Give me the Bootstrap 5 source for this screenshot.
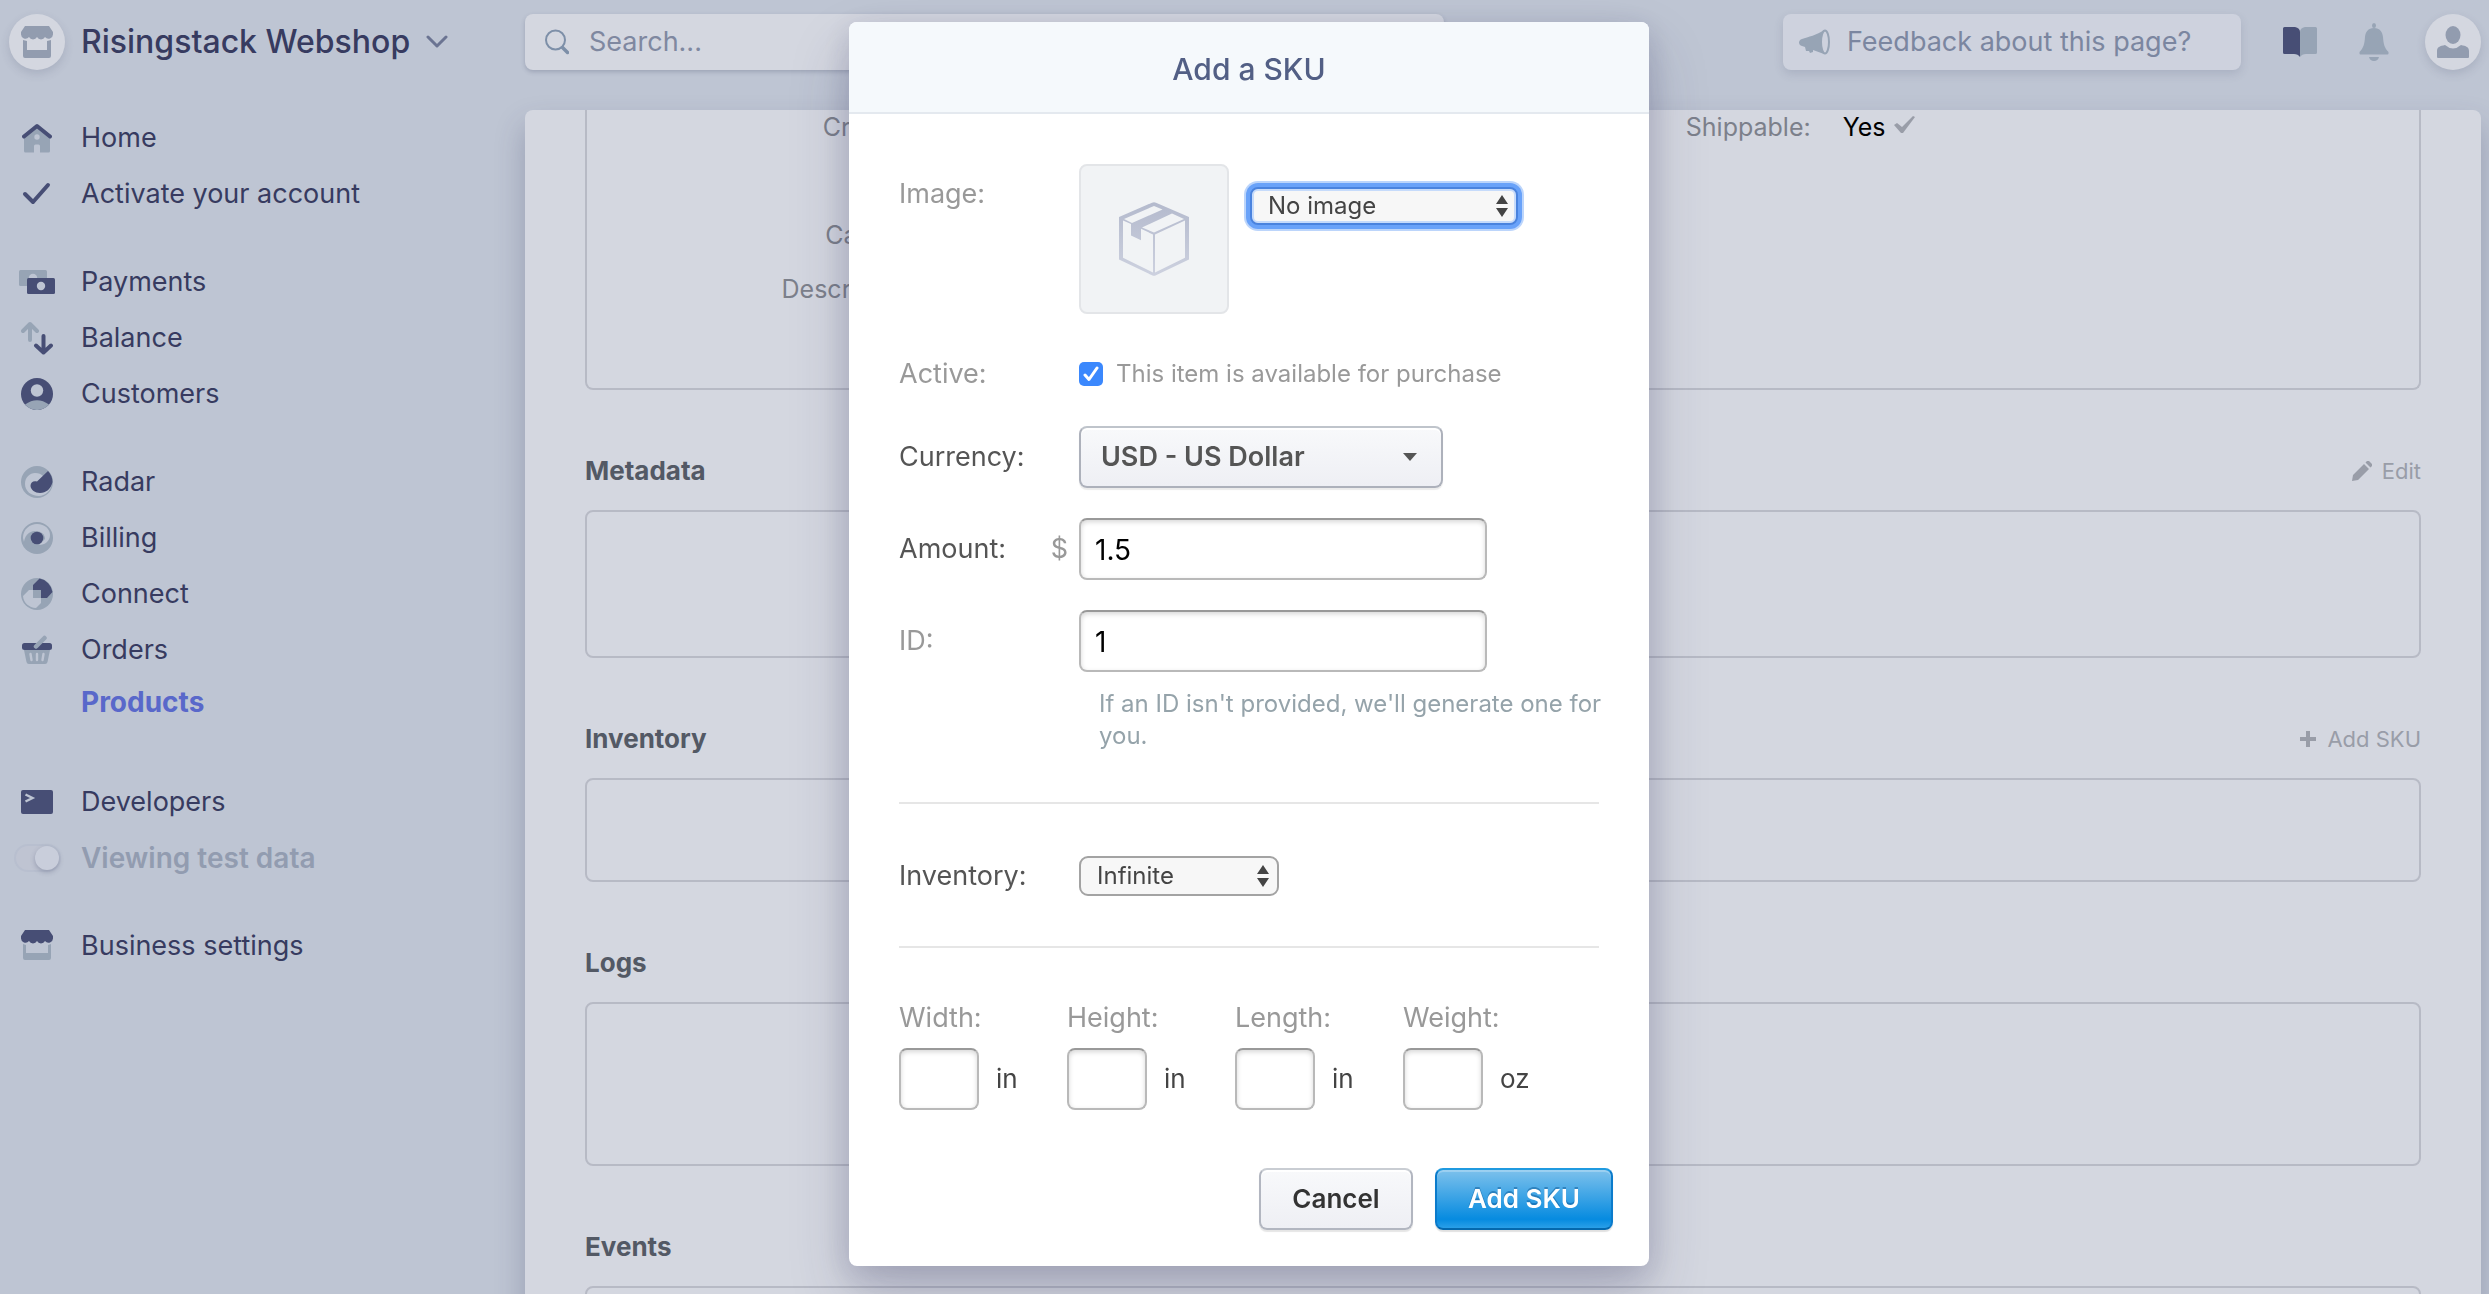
<!DOCTYPE html>
<html lang="en">
<head>
<meta charset="utf-8">
<meta name="viewport" content="width=device-width, initial-scale=1">
<title>Add a SKU</title>
<link rel="stylesheet" href="https://cdn.jsdelivr.net/npm/bootstrap@5.3.0/dist/css/bootstrap.min.css">
<style>
:root{--bg:#bec5d3;--panel:#d4d7e0;--ink:#373b60;--dark:#474e75;--gray:#97a4b5;--rule:#b7bac5}
body{font-family:Inter,"Liberation Sans",sans-serif;font-size:27px;line-height:32px;background:var(--bg);color:var(--ink)}
svg{display:block;flex:none}
a{text-decoration:none;color:inherit}
/* sidebar */
.side{width:525px;padding:14px 9px}
.side-row{display:flex;align-items:center;gap:16px;height:56px}
.side-slot{width:56px;flex:none;display:flex;justify-content:center}
.side-group{margin-bottom:32px}
.side-title{font-size:32px;font-weight:500;border:0;background:none;color:var(--ink);padding:0;margin-bottom:40px}
.side-sub{height:48px;font-size:28px;font-weight:700;color:#5968ca}
.round-chip{width:56px;height:56px;border-radius:50%;background:var(--panel);box-shadow:0 4px 10px rgba(60,66,100,.16);display:flex;align-items:center;justify-content:center;border:0;padding:0}
.test-mode{font-size:28px;font-weight:600;color:#929cb0}
.test-switch{appearance:none;width:47px;height:28px;margin:0;border:2px solid #b8bfcf;border-radius:14px;background:#bfc4d2;display:flex;justify-content:flex-end}
.test-switch::before{content:"";width:24px;height:24px;border-radius:50%;background:#c9cedb;box-shadow:0 2px 5px rgba(60,66,100,.3)}
/* top bar */
.topline{padding:14px 0 40px}
.search-box{width:47%;height:56px;border-radius:8px;background:var(--panel);box-shadow:0 2px 4px rgba(60,66,100,.25);padding:0 20px;gap:20px}
.search-box input{border:0;background:none;outline:0;color:#7f88a0;width:100%;padding:0}
.search-box input::placeholder{color:#7f88a0;opacity:1}
.feedback{width:458px;height:56px;border:0;border-radius:8px;background:#ced2de;color:#7b86a0;padding:0 16px;gap:17px;box-shadow:0 4px 10px rgba(60,66,100,.15);margin-right:42px}
.bare{border:0;background:none;padding:0}
.bare-book{margin-right:42px}
.bare-bell{margin-right:36px}
/* main panel */
.sheet{background:var(--panel);border-radius:8px 8px 0 0;padding:0 60px;margin-right:8px;box-shadow:0 16px 30px rgba(50,54,93,.28);color:#7c808b}
.frame{border:2px solid var(--rule);border-radius:8px}
.frame-details{border-top:0;border-radius:0 0 8px 8px;height:280px;font-size:25px}
.detail-col{width:48.4%;margin-top:-10px}
.detail-label{width:337px;text-align:right}
.detail-line{height:54px;align-items:center;display:flex}
.sec-head{margin:65px 0 23px;height:32px;display:flex;align-items:center;justify-content:space-between}
.sec-head h2{font-size:26px;line-height:32px;font-weight:700;color:#535965;margin:0}
.sec-head button{color:#999da8;font-size:22px;gap:10px}
.f-meta{height:148px}.f-inv{height:104px}.f-logs{height:164px}
/* dialog */
.sku-modal{padding-left:9px}
.sku-dialog{max-width:800px;margin:22px auto}
.sku-content{border:0;border-radius:8px;box-shadow:0 30px 60px rgba(50,50,93,.22),0 8px 30px rgba(50,50,93,.18);color:#555}
.sku-header{height:92px;background:#f5f9fc;border-bottom:2px solid #e4e9ef;border-radius:8px 8px 0 0;justify-content:center;padding:4px 0 0}
.sku-header h1{font-size:30px;line-height:36px;font-weight:500;color:#525f85;margin:0}
.sku-body{padding:50px 50px 58px}
.sku-footer{padding:0 36px 36px;gap:22px;border:0}
.sku-footer>*{margin:0}
.frow{display:flex;align-items:center}
.gap-image{margin-top:44px}
.gap-active{margin-top:36px}
.gap-field{margin-top:30px}
.flabel{width:180px;flex:none;display:flex;justify-content:space-between;padding-right:11px}
.flabel-image{padding-top:14px}
.soft{color:#999}
.thumb{width:150px;height:150px;border:2px solid #e3e5e8;border-radius:8px;background:#f1f3f5;display:flex;align-items:center;justify-content:center}
.pick{position:relative}
.pick select{appearance:none;width:100%;background:none;border:0;outline:0;color:inherit;font-size:inherit;font-weight:inherit;height:100%;padding:0 16px}
.pick svg{position:absolute;pointer-events:none;right:8px;top:50%;transform:translateY(-50%)}
.pick-small{height:40px;border:2px solid #a3a3a3;border-radius:9px;background:#f7f7f7;color:#444;font-size:24px;width:200px}
.pick-image{width:268px;height:38px;border:2px solid #4a83de;margin:23px 0 0 21px;border-radius:8px;box-shadow:inset 0 0 0 2px #c6dbfb,0 0 0 4px #69a2f9,0 0 0 6px #bcd5fb}
.pick-cur{width:364px;height:62px;border:2px solid #adb1bb;border-top-color:#bfc4cb;border-radius:8px;background:linear-gradient(#f8f9fb,#eeeff4);box-shadow:0 2px 1px rgba(0,0,0,.08),inset 0 2px #fff;font-weight:600;color:#555}
.pick-cur select{padding:0 20px}
.pick-cur svg{right:24px}
.tick{appearance:none;width:24px;height:24px;border-radius:5px;margin:0;background:#3b88fd;flex:none}
.tick-wrap{position:relative}
.tick-wrap svg{position:absolute;left:4px;top:4px;pointer-events:none}
.note{font-size:24px;margin-left:13px}
.field{height:62px;width:408px;border:2px solid #b9b9b9;border-top-color:#999;border-radius:8px;padding:2px 14px 0;font-size:28px;color:#000;background:#fff;box-shadow:inset 0 2px 5px rgba(0,0,0,.16)}
.field-sm{width:80px}
.help{font-size:24px;color:#95a3aa;margin:16px -20px 0 200px}
.line{height:2px;background:#e6e6e6;border:0;opacity:1;margin:50px 0 52px}
.dims{margin-top:54px}
.dim{width:168px}
.dim label{margin-bottom:14px}
.unit{font-size:26px;margin-left:17px;color:#444}
.push{height:62px;border-radius:8px;font-size:26px;font-weight:600;padding:0}
.push-plain{width:154px;border:2px solid #b2b6c0;border-top-color:#c9cdd3;background:linear-gradient(#f8f9fb,#eeeff4);box-shadow:0 2px 1px rgba(0,0,0,.1),inset 0 2px #fff;color:#333}
.push-blue{width:178px;border:2px solid #0b7bcb;border-top-color:#1f9ae0;border-bottom-color:#0468ae;background:linear-gradient(#7dc1ec,#068be0 85%,#2a9fe8);box-shadow:0 2px 1px rgba(0,0,0,.12),inset 0 2px rgba(255,255,255,.25);color:#fff;text-shadow:0 -2px rgba(0,70,130,.4)}
</style>
<script src="https://cdn.jsdelivr.net/npm/bootstrap@5.3.0/dist/js/bootstrap.bundle.min.js"></script>
</head>
<body>
<div class="d-flex vh-100 overflow-hidden">
  <aside class="side flex-shrink-0">
    <button class="side-row side-title" type="button">
      <span class="round-chip"><svg width="32" height="32" viewBox="0 0 32 32" fill="#929caf"><path d="M4 0h24l4 6v2a4.500 4.500 0 0 1-8 3a4.500 4.500 0 0 1-8 0a4.500 4.500 0 0 1-8 0a4.500 4.500 0 0 1-8-3V6z"/><path d="M2 14l4 1v9h20v-9l4-1v16a2 2 0 0 1-2 2H4a2 2 0 0 1-2-2z"/></svg></span>
      <span>Risingstack Webshop</span>
      <svg width="22" height="14" viewBox="0 0 22 14" fill="none" stroke="#6b7492" stroke-width="3" stroke-linecap="round" stroke-linejoin="round"><path d="M2 2l9 9 9-9"/></svg>
    </button>
    <nav>
      <div class="side-group">
        <a class="side-row" href="#"><span class="side-slot"><svg width="30" height="30" viewBox="0 0 30 30"><path d="M2 12L15 3l13 9v16a1.500 1.500 0 0 1-1.500 1.500H18V23a1.500 1.500 0 0 0-1.500-1.500h-3A1.500 1.500 0 0 0 12 23v6.500H3.500A1.500 1.500 0 0 1 2 28z" fill="#97a4b5"/><circle cx="15" cy="14" r="2.700" fill="#bec5d3"/><path d="M2 13.500L15 3l13 10.500" fill="none" stroke="#474e75" stroke-width="4" stroke-linecap="round" stroke-linejoin="round"/></svg></span>Home</a>
        <a class="side-row" href="#"><span class="side-slot"><svg width="30" height="24" viewBox="0 0 30 24" fill="none" stroke="#474e75" stroke-width="4" stroke-linecap="round" stroke-linejoin="round"><path d="M3 12l8 8L26 3"/></svg></span>Activate your account</a>
      </div>
      <div class="side-group">
        <a class="side-row" href="#"><span class="side-slot"><svg width="36" height="24" viewBox="0 0 36 24"><rect width="28" height="16" rx="1.500" fill="#97a4b5"/><circle cx="14" cy="8" r="4.200" fill="#bec5d3"/><rect x="8" y="8" width="28" height="16" rx="1.500" fill="#474e75"/><circle cx="22" cy="16" r="4.200" fill="#bec5d3"/></svg></span>Payments</a>
        <a class="side-row" href="#"><span class="side-slot"><svg width="32" height="34" viewBox="0 0 32 34" fill="none" stroke-width="4" stroke-linecap="round" stroke-linejoin="round"><path d="M9 19V3M2 10l7-7 7 7" stroke="#97a4b5"/><path d="M22.500 15v16M15 24.500l7.500 7 7.500-7" stroke="#474e75"/></svg></span>Balance</a>
        <a class="side-row" href="#"><span class="side-slot"><svg width="32" height="32" viewBox="0 0 32 32"><circle cx="16" cy="16" r="16" fill="#474e75"/><path d="M4 26.600Q16 18 28 26.600A16 16 0 0 1 4 26.600z" fill="#97a4b5"/><circle cx="16" cy="12.500" r="6.200" fill="#bec5d3"/></svg></span>Customers</a>
      </div>
      <div>
        <a class="side-row" href="#"><span class="side-slot"><svg width="32" height="32" viewBox="0 0 32 32"><circle cx="16" cy="16" r="16" fill="#97a4b5"/><path d="M4 18C4 11 9 7 14 7c4 0 6 1 8 3l9 7c-1 8-7 13-13 13C10 30 4 25 4 18z" fill="#bec5d3"/><path d="M27 5a16 16 0 0 1 4.500 11C30 23 25 27 19 27c-5 0-9-3-9.500-7c0-4 3-5.500 6.500-4.500z" fill="#474e75"/></svg></span>Radar</a>
        <a class="side-row" href="#"><span class="side-slot"><svg width="32" height="32" viewBox="0 0 32 32"><circle cx="16" cy="16" r="16" fill="#97a4b5"/><path d="M2 16C2 7 9 2 16 2c8 0 13 5 13 11c0 6-5 10-11 10C12 23 4 16 3 20z" fill="#bec5d3"/><path d="M3 21C3 14 8 9 14 9c6 0 10 3 10 8l-6 6-10 4z" fill="#97a4b5"/><circle cx="16" cy="16" r="6.300" fill="#474e75"/></svg></span>Billing</a>
        <a class="side-row" href="#"><span class="side-slot"><svg width="32" height="32" viewBox="0 0 32 32"><circle cx="16" cy="16" r="16" fill="#97a4b5"/><path d="M12 12V7l6.500-6.500A16 16 0 0 1 31.500 14L26 20h-6v-8z" fill="#474e75"/><path d="M12 12v8h8v5l-5 5C8 29.500 2.500 25 2 18l6-6z" fill="#bec5d3"/></svg></span>Connect</a>
        <a class="side-row" href="#"><span class="side-slot"><svg width="30" height="30" viewBox="0 0 30 30"><path d="M2 15h26l-2.500 12a2.500 2.500 0 0 1-2.500 2H7a2.500 2.500 0 0 1-2.500-2z" fill="#97a4b5"/><path d="M8.500 19l1 6M15 19v6M21.500 19l-1 6" stroke="#bec5d3" stroke-width="2.400" stroke-linecap="round"/><rect y="8" width="30" height="7" rx="2.500" fill="#474e75"/><path d="M14 11.500L22.500 3" stroke="#97a4b5" stroke-width="4.500" stroke-linecap="round"/></svg></span>Orders</a>
        <a class="side-row side-sub" href="#"><span class="side-slot"></span>Products</a>
      </div>
      <div class="side-group mt-5">
        <a class="side-row" href="#"><span class="side-slot"><svg width="32" height="24" viewBox="0 0 32 24"><rect width="32" height="24" rx="2" fill="#474e75"/><path d="M4.500 4.500L11.500 8l-7 3.500" fill="none" stroke="#bec5d3" stroke-width="2.400"/></svg></span>Developers</a>
        <label class="side-row test-mode"><span class="side-slot"><input class="test-switch" type="checkbox" role="switch" checked></span>Viewing test data</label>
      </div>
      <a class="side-row" href="#"><span class="side-slot"><svg width="32" height="32" viewBox="0 0 32 32"><path d="M4 0h24l4 6v2a4.500 4.500 0 0 1-8 3a4.500 4.500 0 0 1-8 0a4.500 4.500 0 0 1-8 0a4.500 4.500 0 0 1-8-3V6z" fill="#474e75"/><path d="M2 14l3 1v8h22v-8l3-1v14a2 2 0 0 1-2 2H4a2 2 0 0 1-2-2z" fill="#97a4b5"/></svg></span>Business settings</a>
    </nav>
  </aside>

  <main class="flex-grow-1 d-flex flex-column">
    <header class="topline d-flex align-items-center me-2">
      <label class="search-box d-flex align-items-center me-auto">
        <svg width="24" height="26" viewBox="0 0 24 26" fill="none" stroke="#7d8fa8" stroke-linecap="round"><circle cx="10.500" cy="11" r="9.500" stroke-width="2"/><path d="M17.500 18.500l5 5" stroke-width="3.500"/></svg>
        <input type="text" placeholder="Search..." aria-label="Search">
      </label>
      <button class="feedback d-flex align-items-center" type="button">
        <svg width="31" height="26" viewBox="0 0 31 26"><path d="M25 1C18 6 9 8 3 10c-4 1-4 6 0 7l3 1 1 4 3 0 1 2 3-1v-2l11 4z" fill="#97a4b5"/><ellipse cx="26" cy="13" rx="4" ry="11.500" fill="#ced2de" stroke="#97a4b5" stroke-width="2"/></svg>
        <span>Feedback about this page?</span>
      </button>
      <button class="bare bare-book" type="button" aria-label="Documentation"><svg width="34" height="30" viewBox="0 0 34 30"><path d="M1.500 0H12q5 1 5 5v25q-2-3-6-3H1.500A1.500 1.500 0 0 1 0 25.500v-24A1.500 1.500 0 0 1 1.500 0z" fill="#474e75"/><path d="M32.500 0H22q-5 1-5 5v25q2-3 6-3h9.500a1.500 1.500 0 0 0 1.500-1.500v-24A1.500 1.500 0 0 0 32.500 0z" fill="#97a4b5"/></svg></button>
      <button class="bare bare-bell" type="button" aria-label="Notifications"><svg width="30" height="38" viewBox="0 0 30 38" fill="#97a4b5"><ellipse cx="15" cy="2.500" rx="2" ry="2.500"/><path d="M15 5c6 0 8.500 4 9 9c.5 7 1.500 11 5.500 15v1.500a1 1 0 0 1-1 1h-27a1 1 0 0 1-1-1V29c4-4 5-8 5.500-15c.5-5 3-9 9-9zM10 34h10q-1 4-5 4t-5-4z"/></svg></button>
      <button class="round-chip" type="button" aria-label="Account"><svg width="32" height="32" viewBox="0 0 32 32" fill="#929caf"><ellipse cx="16" cy="9" rx="7.500" ry="9"/><path d="M0 31v-6c0-4 3-5 8-6q8 7 16 0c5 1 8 2 8 6v6a1 1 0 0 1-1 1H1a1 1 0 0 1-1-1z"/></svg></button>
    </header>

    <section class="sheet flex-grow-1">
      <div class="frame frame-details d-flex">
        <div class="detail-col">
          <div class="detail-line"><span class="detail-label">Created:</span></div>
          <div class="detail-line"></div>
          <div class="detail-line"><span class="detail-label">Caption:</span></div>
          <div class="detail-line"><span class="detail-label">Description:</span></div>
        </div>
        <div class="detail-col">
          <div class="detail-line"><span class="detail-label">Shippable:</span><span class="ps-4 ms-2 text-black">Yes</span>
            <svg class="ms-2 mb-1" width="22" height="18" viewBox="0 0 22 18" fill="#999da8"><path d="M0 9l3-2 5 4L19 0l2 1L9 17H7z"/></svg></div>
        </div>
      </div>
      <div class="sec-head"><h2>Metadata</h2><button class="bare d-flex align-items-center" type="button"><svg width="20" height="20" viewBox="0 0 20 20" fill="#999da8"><path d="M0 20l1-6L12 3l5 5L6 19zM13.500 1.500L15 0h2l3 3v2l-1.500 1.500z"/></svg>Edit</button></div>
      <div class="frame f-meta"></div>
      <div class="sec-head"><h2>Inventory</h2><button class="bare d-flex align-items-center" type="button"><svg width="18" height="18" viewBox="0 0 18 18" stroke="#999da8" stroke-width="4"><path d="M1 9h16M9 1v16"/></svg>Add SKU</button></div>
      <div class="frame f-inv"></div>
      <div class="sec-head"><h2>Logs</h2></div>
      <div class="frame f-logs"></div>
      <div class="sec-head"><h2>Events</h2></div>
      <div class="frame f-logs"></div>
    </section>
  </main>
</div>

<div class="modal d-block overflow-hidden sku-modal" role="dialog" aria-labelledby="dlg">
  <div class="modal-dialog sku-dialog">
    <form class="modal-content sku-content">
      <div class="modal-header sku-header"><h1 id="dlg">Add a SKU</h1></div>
      <div class="modal-body sku-body">
        <div class="frow align-items-start">
          <label class="flabel flabel-image soft" for="image">Image:</label>
          <div class="thumb"><svg width="70" height="74" viewBox="0 0 70 74"><defs><linearGradient id="bx" x2="0" y2="1"><stop stop-color="#b4bacd"/><stop offset="1" stop-color="#cdd1df"/></linearGradient></defs><path fill="url(#bx)" fill-rule="evenodd" d="M33 .7q2-1 4 0L70 15v42.500L37 73.300q-2 1-4 0L0 57.500V15zM4 18.500v37.200L34 70.500V32.500L22 26.800v11.400l-10-4.600V22.100zM66 18.500L36 32.500v38l30-14.800zM35 4L5 17l8 4L43.500 7.500zM23 25.500l12 5L65 17 53 11.500z"/></svg></div>
          <div class="pick pick-small pick-image"><select id="image"><option>No image</option></select><svg width="12" height="22" viewBox="0 0 12 22" fill="#444"><path d="M6 0l6 9H0zM6 22l6-9H0z"/></svg></div>
        </div>
        <div class="frow gap-image">
          <label class="flabel soft" for="active">Active:</label>
          <span class="tick-wrap d-flex"><input class="tick" type="checkbox" id="active" checked><svg width="16" height="16" viewBox="0 0 16 16" fill="none" stroke="#fff" stroke-width="3" stroke-linecap="round" stroke-linejoin="round"><path d="M2 9l4 4.500L14 2"/></svg></span>
          <label class="note soft" for="active">This item is available for purchase</label>
        </div>
        <div class="frow gap-active">
          <label class="flabel" for="cur">Currency:</label>
          <div class="pick pick-cur"><select id="cur"><option>USD - US Dollar</option></select><svg width="14" height="8" viewBox="0 0 14 8" fill="#555"><path d="M0 0h14L7 8z"/></svg></div>
        </div>
        <div class="frow gap-field">
          <div class="flabel"><label for="amount">Amount:</label><span class="soft">$</span></div>
          <input class="field" id="amount" type="text" value="1.5">
        </div>
        <div class="frow gap-field">
          <label class="flabel soft" for="sid">ID:</label>
          <input class="field" id="sid" type="text" value="1">
        </div>
        <p class="help">If an ID isn't provided, we'll generate one for you.</p>
        <hr class="line">
        <div class="frow">
          <label class="flabel" for="inv">Inventory:</label>
          <div class="pick pick-small"><select id="inv"><option>Infinite</option></select><svg width="12" height="22" viewBox="0 0 12 22" fill="#444"><path d="M6 0l6 9H0zM6 22l6-9H0z"/></svg></div>
        </div>
        <hr class="line">
        <div class="d-flex dims">
          <div class="dim"><label class="soft d-block" for="dw">Width:</label><div class="frow"><input class="field field-sm" id="dw" type="text"><span class="unit">in</span></div></div>
          <div class="dim"><label class="soft d-block" for="dh">Height:</label><div class="frow"><input class="field field-sm" id="dh" type="text"><span class="unit">in</span></div></div>
          <div class="dim"><label class="soft d-block" for="dl">Length:</label><div class="frow"><input class="field field-sm" id="dl" type="text"><span class="unit">in</span></div></div>
          <div class="dim"><label class="soft d-block" for="dz">Weight:</label><div class="frow"><input class="field field-sm" id="dz" type="text"><span class="unit">oz</span></div></div>
        </div>
      </div>
      <div class="modal-footer sku-footer">
        <button class="push push-plain" type="button">Cancel</button>
        <button class="push push-blue" type="submit">Add SKU</button>
      </div>
    </form>
  </div>
</div>
</body>
</html>
